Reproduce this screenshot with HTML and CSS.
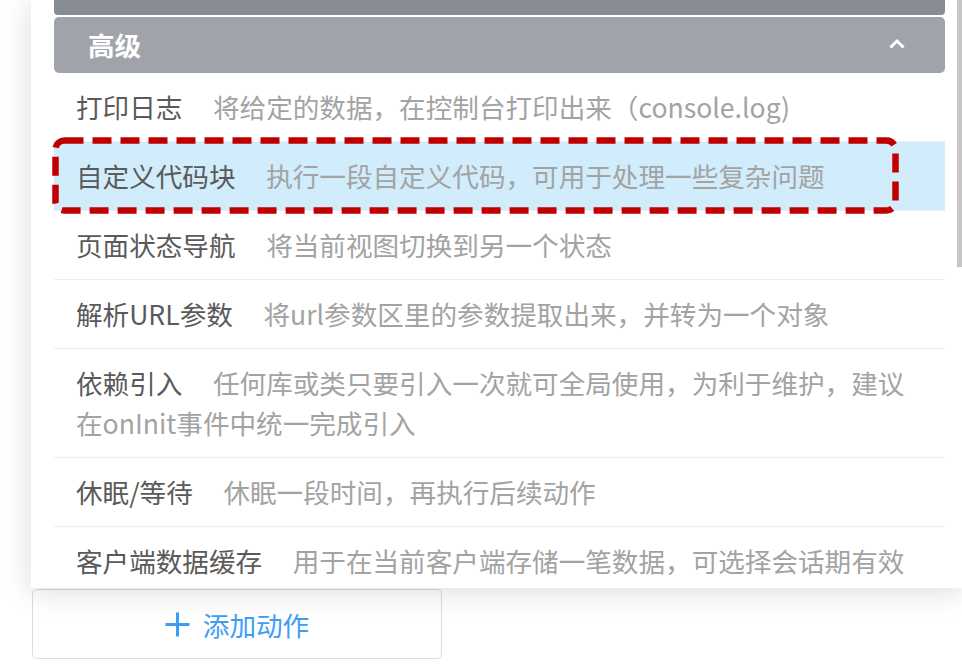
FILE: index.html
```html
<!DOCTYPE html>
<html lang="zh-CN">
<head>
<meta charset="utf-8">
<title>添加动作</title>
<link rel="stylesheet" href="styles.css">
</head>
<body>
<div class="page">
  <div class="panel">
    <div class="list">
      <div class="group-prev"></div>
      <div class="group-head">
        <span class="group-title">高级</span>
        <svg class="chev" width="20" height="12" viewBox="0 0 20 12"><polyline points="4.5,9.5 10,4 15.5,9.5" fill="none" stroke="#ffffff" stroke-width="3" stroke-linecap="square"/></svg>
      </div>
      <ul class="items">
        <li class="item"><span class="t">打印日志</span><span class="d">将给定的数据，在控制台打印出来（console.log)</span></li>
        <li class="item active"><span class="t">自定义代码块</span><span class="d">执行一段自定义代码，可用于处理一些复杂问题</span>
          <svg class="mark" width="847" height="77" viewBox="0 0 847 77"><rect x="3.5" y="3.5" width="840" height="70" rx="9" ry="9" fill="none" stroke="#c00000" stroke-width="6.5" stroke-dasharray="19 9"/></svg>
        </li>
        <li class="item"><span class="t">页面状态导航</span><span class="d">将当前视图切换到另一个状态</span></li>
        <li class="item"><span class="t">解析URL参数</span><span class="d">将url参数区里的参数提取出来，并转为一个对象</span></li>
        <li class="item"><span class="t">依赖引入</span><span class="d">任何库或类只要引入一次就可全局使用，为利于维护，建议</span><br><span class="d2">在onInit事件中统一完成引入</span></li>
        <li class="item"><span class="t">休眠/等待</span><span class="d">休眠一段时间，再执行后续动作</span></li>
        <li class="item"><span class="t">客户端数据缓存</span><span class="d">用于在当前客户端存储一笔数据，可选择会话期有效</span></li>
      </ul>
    </div>
    <div class="scrollbar"><div class="thumb"></div></div>
  </div>
  <button class="add" type="button">
    <svg class="plus" width="25" height="25" viewBox="0 0 25 25"><path d="M12.5 0.5 V24.5 M0.5 12.5 H24.5" stroke="#3d9df6" stroke-width="3" fill="none"/></svg>
    <span>添加动作</span>
  </button>
</div>
</body>
</html>
```
FILE: styles.css
```css
html, body {
  margin: 0;
  padding: 0;
  background: #ffffff;
  overflow: hidden;
  width: 962px;
  height: 667px;
}

body {
  font-family: "Noto Sans CJK SC", "Noto Sans", sans-serif;
  font-size: 26.6px;
}

.page {
  padding-left: 31px;
  display: flex;
  flex-direction: column;
  align-items: flex-start;
}

.panel {
  position: relative;
  z-index: 1;
  width: 931px;
  height: 588px;
  background: #ffffff;
  box-shadow: 0 3px 28px rgba(0, 0, 0, 0.15);
  overflow: hidden;
  display: flex;
  padding-left: 23px;
  box-sizing: border-box;
}

.list {
  width: 891px;
  flex: none;
}

.scrollbar {
  margin-left: 12px;
  width: 5px;
  flex: none;
}

.thumb {
  width: 5px;
  height: 267px;
  background: #c6c6c6;
}

.group-prev {
  height: 15px;
  background: #878c93;
  border-radius: 0 0 4px 4px;
  margin-bottom: 2px;
}

.group-head {
  height: 56px;
  background: #a0a4aa;
  border-radius: 5px;
  display: flex;
  align-items: center;
  justify-content: space-between;
  padding: 0 38px 0 34px;
  box-sizing: border-box;
}

.group-title {
  color: #ffffff;
  font-weight: 700;
  line-height: 56px;
}

.chev {
  display: block;
  margin-top: -4px;
}

.items {
  list-style: none;
  margin: 0;
  padding: 0;
}

.item {
  position: relative;
  padding: 14px 22px;
  line-height: 40px;
  border-bottom: 1px solid #eeeeee;
  color: #5c5c5c;
}

.item.active {
  background: #d1ecfb;
}

.t {
  color: #5a5a5a;
}

.d {
  color: #a3a3a3;
  margin-left: 30.6px;
}

.d2 {
  color: #a3a3a3;
}

.mark {
  position: absolute;
  left: -2px;
  top: -5px;
  display: block;
}

.add {
  margin: 1px 0 0 1px;
  width: 410px;
  height: 70px;
  background: #ffffff;
  border: 1px solid #dcdcdc;
  border-radius: 5px;
  display: flex;
  align-items: center;
  justify-content: center;
  gap: 13px;
  font-family: "Noto Sans CJK SC", "Noto Sans", sans-serif;
  font-size: 26.6px;
  color: #3d9df6;
  padding: 0;
}

.plus {
  display: block;
}
```
